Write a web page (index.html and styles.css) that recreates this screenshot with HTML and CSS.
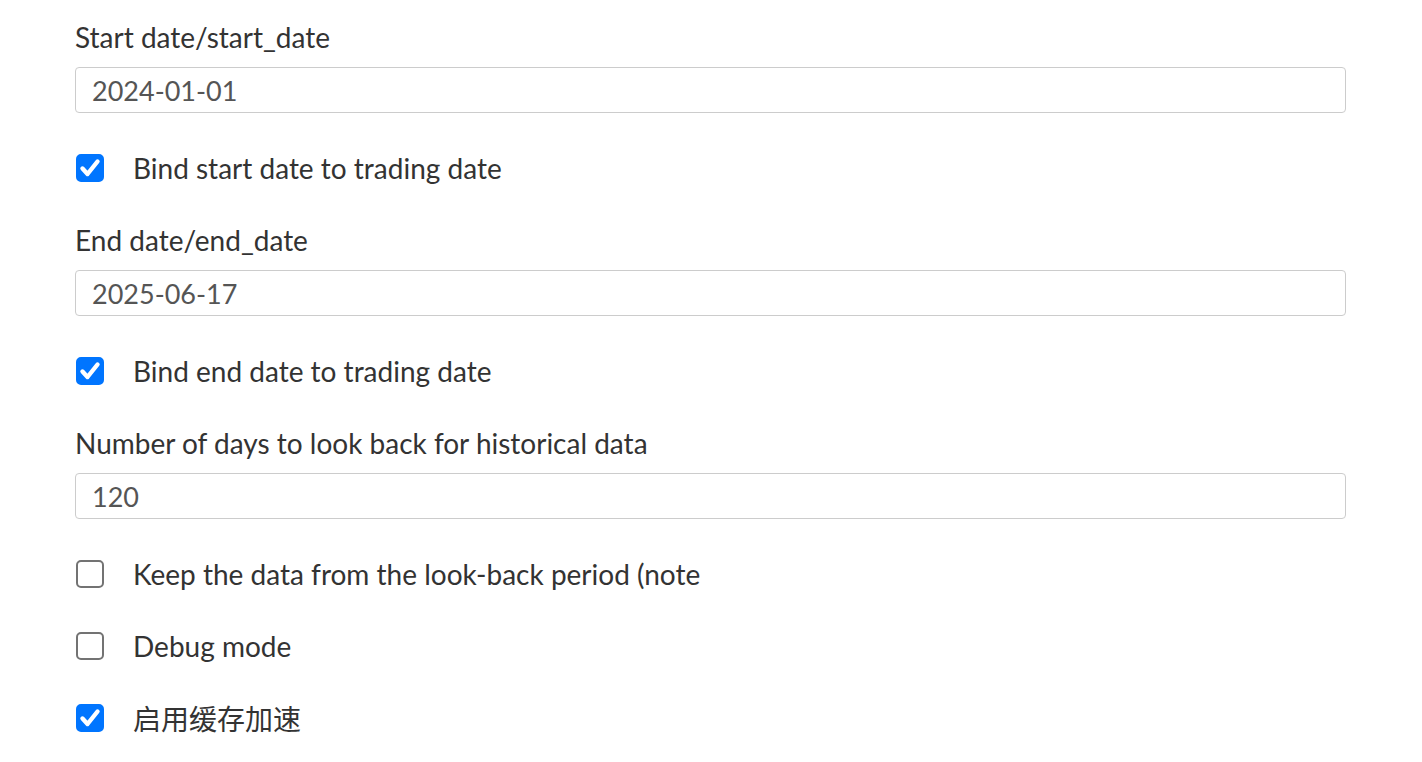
FILE: index.html
```html
<!DOCTYPE html>
<html lang="zh">
<head>
    <meta charset="UTF-8">
    <meta name="viewport" content="width=device-width, initial-scale=1.0">
    <title>Backtest settings</title>
    <link rel="stylesheet" href="styles.css">
</head>
<body>
    <!-- Settings Form -->
    <div class="settings">
        <div class="field">
            <label for="start-date">Start date/start_date</label>
            <input type="text" id="start-date" value="2024-01-01">
        </div>
        <label class="check">
            <input type="checkbox" checked>
            <span class="box"><svg viewBox="0 0 28 28"><path d="M6.5 14.5 L11.5 20 L21.5 7.5"/></svg></span>
            <span>Bind start date to trading date</span>
        </label>

        <div class="field">
            <label for="end-date">End date/end_date</label>
            <input type="text" id="end-date" value="2025-06-17">
        </div>
        <label class="check">
            <input type="checkbox" checked>
            <span class="box"><svg viewBox="0 0 28 28"><path d="M6.5 14.5 L11.5 20 L21.5 7.5"/></svg></span>
            <span>Bind end date to trading date</span>
        </label>

        <div class="field">
            <label for="lookback">Number of days to look back for historical data</label>
            <input type="text" id="lookback" value="120">
        </div>
        <label class="check">
            <input type="checkbox">
            <span class="box"><svg viewBox="0 0 28 28"><path d="M6.5 14.5 L11.5 20 L21.5 7.5"/></svg></span>
            <span>Keep the data from the look-back period (note</span>
        </label>
        <label class="check">
            <input type="checkbox">
            <span class="box"><svg viewBox="0 0 28 28"><path d="M6.5 14.5 L11.5 20 L21.5 7.5"/></svg></span>
            <span>Debug mode</span>
        </label>
        <label class="check">
            <input type="checkbox" checked>
            <span class="box"><svg viewBox="0 0 28 28"><path d="M6.5 14.5 L11.5 20 L21.5 7.5"/></svg></span>
            <span>启用缓存加速</span>
        </label>
    </div>
</body>
</html>
```

FILE: styles.css
```css
/* Global Styles */
body, html {
    margin: 0;
    padding: 0;
    background: #ffffff;
    color: #333333;
    font-family: Lato, "Noto Sans CJK SC", sans-serif;
}

/* Form */
.settings {
    width: 1271px;
    margin-left: 75px;
    padding-top: 19px;
}

.field {
    margin-bottom: 37px;
}

.field label {
    display: block;
    font-size: 28px;
    line-height: 36px;
    margin-bottom: 12px;
}

.field input {
    box-sizing: border-box;
    width: 100%;
    height: 46px;
    padding: 0 16px;
    border: 1px solid #cccccc;
    border-radius: 4px;
    font-family: inherit;
    font-size: 27px;
    color: #555555;
    outline: none;
}

/* Checkboxes */
.check {
    display: flex;
    align-items: center;
    height: 36px;
    margin-bottom: 36px;
    font-size: 28px;
}

.check input {
    display: none;
}

.check .box {
    box-sizing: border-box;
    width: 28px;
    height: 28px;
    margin: 0 29px 0 1px;
    border: 2px solid #737373;
    border-radius: 5px;
    background: #ffffff;
}

.check .box svg {
    display: none;
    width: 28px;
    height: 28px;
    margin: -2px;
}

.check .box path {
    fill: none;
    stroke: #ffffff;
    stroke-width: 4.4;
    stroke-linecap: round;
    stroke-linejoin: round;
}

.check input:checked + .box {
    background: #0075ff;
    border-color: #0075ff;
}

.check input:checked + .box svg {
    display: block;
}
```
